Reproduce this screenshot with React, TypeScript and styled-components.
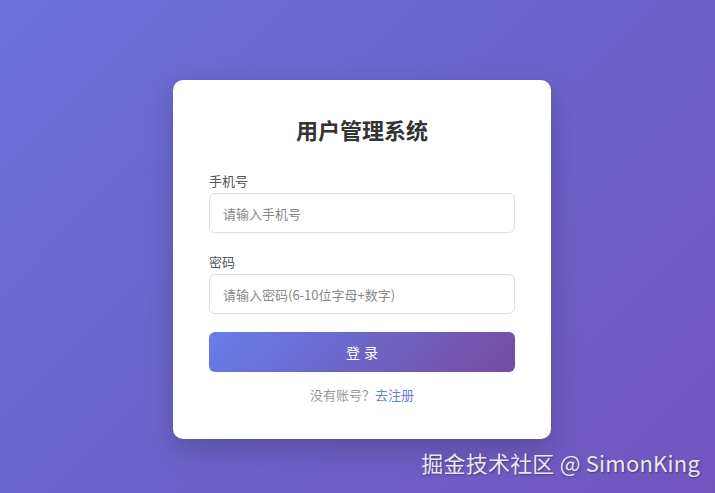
import React, { useState } from 'react';
import styled, { createGlobalStyle } from 'styled-components';

const GlobalStyle = createGlobalStyle`
  html, body {
    margin: 0;
    padding: 0;
    height: 100%;
  }
  body {
    font-family: 'Noto Sans CJK SC', 'Noto Sans', sans-serif;
    overflow: hidden;
  }
  #root {
    height: 100%;
  }
`;

const Page = styled.div`
  position: relative;
  height: 100vh;
  box-sizing: border-box;
  padding: 26px 0 0 9px;
  display: flex;
  align-items: center;
  justify-content: center;
  background: linear-gradient(135deg, #6a71d7 0%, #7156be 100%);
`;

const Card = styled.div`
  width: 378px;
  box-sizing: border-box;
  padding: 34px 36px 34px;
  background: #fff;
  border-radius: 10px;
  box-shadow: 0 10px 30px rgba(0, 0, 0, 0.2);
`;

const Title = styled.h2`
  margin: 0 0 25px;
  text-align: center;
  font-size: 22px;
  line-height: 31px;
  font-weight: 700;
  color: #333;
`;

const FormGroup = styled.div`
  margin-bottom: 18px;
`;

const Label = styled.label`
  display: block;
  margin-bottom: 2px;
  font-size: 13px;
  line-height: 21px;
  color: #555;
`;

const Input = styled.input`
  display: block;
  width: 100%;
  height: 40px;
  box-sizing: border-box;
  padding: 0 13px;
  border: 1px solid #ddd;
  border-radius: 6px;
  font-family: inherit;
  font-size: 13px;
  color: #333;
  outline: none;

  &::placeholder {
    color: #888;
  }

  &:focus {
    border-color: #667eea;
  }
`;

const SubmitButton = styled.button`
  display: block;
  width: 100%;
  height: 40px;
  border: none;
  border-radius: 6px;
  background: linear-gradient(135deg, #667eea 0%, #764ba2 100%);
  color: #fff;
  font-family: inherit;
  font-size: 14px;
  letter-spacing: 4px;
  text-indent: 4px;
  cursor: pointer;
`;

const Footer = styled.p`
  margin: 13px 0 0;
  text-align: center;
  font-size: 13px;
  line-height: 20px;
  color: #999;
`;

const Link = styled.a`
  color: #667eea;
  text-decoration: none;
  cursor: pointer;
`;

const Watermark = styled.div`
  position: absolute;
  right: 15px;
  bottom: 15px;
  font-size: 22px;
  letter-spacing: 0.2px;
  color: rgba(255, 255, 255, 0.88);
  text-shadow: 1px 1px 2px rgba(0, 0, 0, 0.35);
`;

const App: React.FC = () => {
  const [phone, setPhone] = useState('');
  const [password, setPassword] = useState('');

  return (
    <>
      <GlobalStyle />
      <Page>
        <Card>
          <Title>用户管理系统</Title>
          <FormGroup>
            <Label>手机号</Label>
            <Input
              type="text"
              placeholder="请输入手机号"
              value={phone}
              onChange={(e) => setPhone(e.target.value)}
            />
          </FormGroup>
          <FormGroup>
            <Label>密码</Label>
            <Input
              type="password"
              placeholder="请输入密码(6-10位字母+数字)"
              value={password}
              onChange={(e) => setPassword(e.target.value)}
            />
          </FormGroup>
          <SubmitButton>登录</SubmitButton>
          <Footer>
            没有账号？<Link>去注册</Link>
          </Footer>
        </Card>
        <Watermark>掘金技术社区 @ SimonKing</Watermark>
      </Page>
    </>
  );
};

export default App;
